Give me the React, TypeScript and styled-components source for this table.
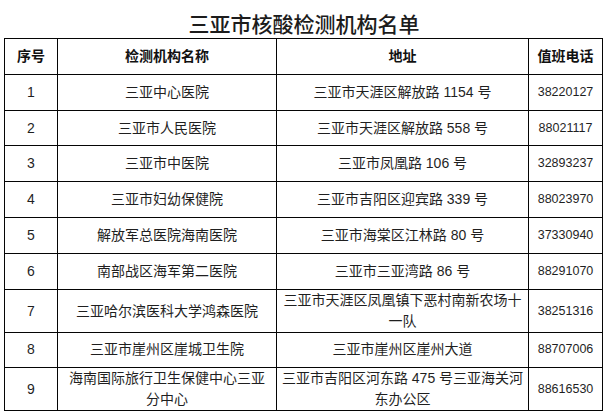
import styled, { createGlobalStyle } from "styled-components";

const GlobalStyle = createGlobalStyle`
  html, body {
    margin: 0;
    padding: 0;
    background: #ffffff;
  }
  body {
    font-family: "Liberation Sans", "Noto Sans CJK SC", sans-serif;
    color: #222;
  }
`;

const Page = styled.div`
  width: 608px;
  height: 414px;
  overflow: hidden;
  background: #fff;
`;

const Title = styled.h1`
  margin: 0;
  height: 38px;
  padding-top: 7px;
  box-sizing: border-box;
  display: flex;
  align-items: center;
  justify-content: center;
  font-family: "Noto Sans CJK SC", sans-serif;
  font-size: 21px;
  font-weight: 500;
  color: #1c1c1c;
`;

const Table = styled.div`
  margin-left: 4px;
  width: 599px;
  box-sizing: border-box;
  border-top: 1px solid #050505;
  border-left: 1px solid #050505;
`;

const Row = styled.div<{ $h: number }>`
  display: grid;
  grid-template-columns: 53px 219px 252px 74px;
  height: ${(p) => p.$h}px;
`;

const Cell = styled.div<{ $head?: boolean }>`
  box-sizing: border-box;
  border-right: 1px solid #050505;
  border-bottom: 1px solid #050505;
  display: flex;
  align-items: center;
  justify-content: center;
  text-align: center;
  font-size: 14px;
  line-height: 21px;
  font-weight: ${(p) => (p.$head ? 700 : 400)};
  color: ${(p) => (p.$head ? "#111" : "#1f1f1f")};
`;

const IndexCell = styled(Cell)``;

const NameCell = styled(Cell)`
  padding: 0 6px;
`;

const AddressCell = styled(Cell)`
  padding: 0 4px;
`;

const PhoneCell = styled(Cell)`
  font-size: ${(p) => (p.$head ? "14px" : "12.5px")};
`;

const rows = [
  { id: 1, name: "三亚中心医院", addr: "三亚市天涯区解放路 1154 号", tel: "38220127", h: 36 },
  { id: 2, name: "三亚市人民医院", addr: "三亚市天涯区解放路 558 号", tel: "88021117", h: 35 },
  { id: 3, name: "三亚市中医院", addr: "三亚市凤凰路 106 号", tel: "32893237", h: 36 },
  { id: 4, name: "三亚市妇幼保健院", addr: "三亚市吉阳区迎宾路 339 号", tel: "88023970", h: 36 },
  { id: 5, name: "解放军总医院海南医院", addr: "三亚市海棠区江林路 80 号", tel: "37330940", h: 36 },
  { id: 6, name: "南部战区海军第二医院", addr: "三亚市三亚湾路 86 号", tel: "88291070", h: 36 },
  { id: 7, name: "三亚哈尔滨医科大学鸿森医院", addr: "三亚市天涯区凤凰镇下恶村南新农场十一队", tel: "38251316", h: 42 },
  { id: 8, name: "三亚市崖州区崖城卫生院", addr: "三亚市崖州区崖州大道", tel: "88707006", h: 36 },
  { id: 9, name: "海南国际旅行卫生保健中心三亚分中心", addr: "三亚市吉阳区河东路 475 号三亚海关河东办公区", tel: "88616530", h: 43 },
];

export default function App() {
  return (
    <Page>
      <GlobalStyle />
      <Title>三亚市核酸检测机构名单</Title>
      <Table>
        <Row $h={36}>
          <IndexCell $head>序号</IndexCell>
          <NameCell $head>检测机构名称</NameCell>
          <AddressCell $head>地址</AddressCell>
          <PhoneCell $head>值班电话</PhoneCell>
        </Row>
        {rows.map((r) => (
          <Row key={r.id} $h={r.h}>
            <IndexCell>{r.id}</IndexCell>
            <NameCell>{r.name}</NameCell>
            <AddressCell>{r.addr}</AddressCell>
            <PhoneCell>{r.tel}</PhoneCell>
          </Row>
        ))}
      </Table>
    </Page>
  );
}
